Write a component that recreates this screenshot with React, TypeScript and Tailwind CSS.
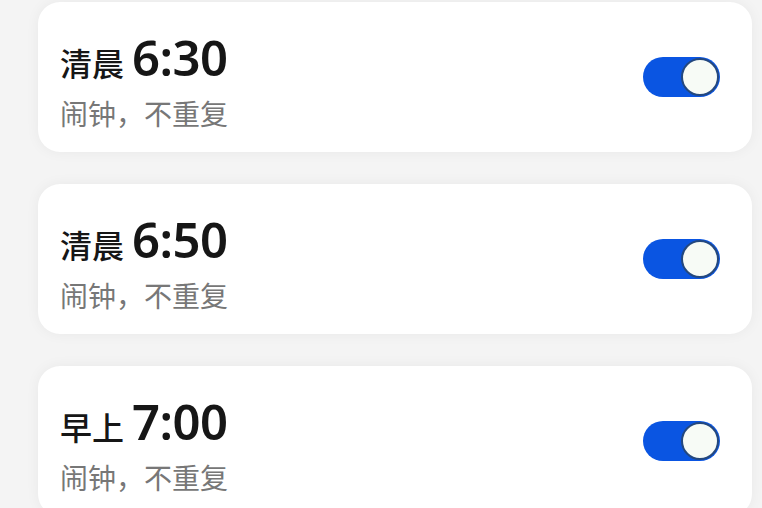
const alarms = [
  { period: "清晨", time: "6:30" },
  { period: "清晨", time: "6:50" },
  { period: "早上", time: "7:00" },
];

function Toggle() {
  return (
    <div className="w-[77px] h-[40px] rounded-full bg-[#0a55e2] flex items-center justify-end pr-[1px]">
      <div className="w-[38px] h-[38px] rounded-full bg-[#f7fbf6] border-[2.5px] border-[#24487e]" />
    </div>
  );
}

export default function App() {
  return (
    <div
      className="w-[762px] h-[508px] overflow-hidden bg-[#f4f4f4] pl-[38px] pr-[10px] pt-[2px] flex flex-col gap-[32px]"
      style={{ fontFamily: '"Noto Sans", "Noto Sans CJK SC", sans-serif' }}
    >
      {alarms.map((a, i) => (
        <div
          key={i}
          className="shrink-0 h-[150px] rounded-[22px] bg-white shadow-[0_0_14px_rgba(0,0,0,0.05)] pl-[22px] pr-[32px] flex items-center justify-between"
        >
          <div className="flex flex-col mt-[6px]">
            <div className="flex items-baseline text-[#161616] leading-none">
              <span className="text-[32px] font-medium" style={{ fontFamily: '"Noto Sans CJK SC", sans-serif' }}>{a.period}</span>
              <span className="text-[49px] font-semibold ml-[8px] tracking-[-0.5px]">{a.time}</span>
            </div>
            <div className="mt-[17px] text-[28px] text-[#777777] leading-none" style={{ fontFamily: '"Noto Sans CJK SC", sans-serif' }}>
              闹钟，不重复
            </div>
          </div>
          <Toggle />
        </div>
      ))}
    </div>
  );
}
